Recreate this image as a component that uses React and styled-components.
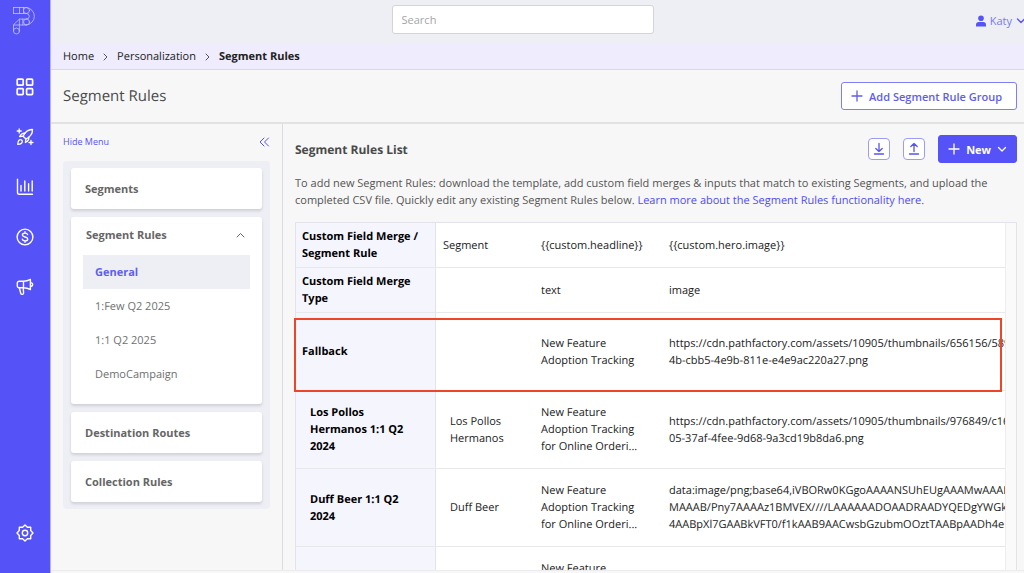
import React, { useState } from 'react';
import styled, { createGlobalStyle } from 'styled-components';

const GlobalStyle = createGlobalStyle`
    * {
        box-sizing: border-box;
    }

    body {
        margin: 0;
        background: #f7f7f7;
        color: #222;
        font-family: "Open Sans", "Noto Sans", sans-serif;
        font-size: 11px;
        line-height: 17px;
        text-rendering: geometricPrecision;
    }

    button, input {
        font: inherit;
    }

    a {
        color: inherit;
        text-decoration: none;
    }

    svg {
        display: block;
        flex-shrink: 0;
        fill: none;
        stroke: currentColor;
        stroke-linecap: round;
        stroke-linejoin: round;
    }
`;

const Shell = styled.div`
    display: flex;
    height: 100vh;
    overflow: hidden;
`;

const Sidebar = styled.nav`
    display: flex;
    flex-direction: column;
    align-items: center;
    gap: 32px;
    width: 51px;
    flex-shrink: 0;
    padding: 6px 0 31px;
    background: #5553f7;
    border-right: 1px solid #b5b4f8;
    color: #fff;
`;

const NavLink = styled.a`
    display: block;

    &:last-child {
        margin-top: auto;
    }
`;

const LogoLink = styled.a`
    margin-bottom: 11px;
    color: #c3c2fc;
`;

const Page = styled.div`
    display: flex;
    flex-direction: column;
    flex: 1;
    min-width: 0;
`;

const TopBar = styled.header`
    display: grid;
    grid-template-columns: 35% 27% 1fr;
    padding: 5px 0 10px;
    background: #eeeff5;
`;

const SearchInput = styled.input`
    grid-column: 2;
    width: 100%;
    height: 29px;
    padding: 0 9px;
    border: 1px solid #d3d3d8;
    border-radius: 3px;
    background: #fff;
    outline: none;

    &::placeholder {
        color: #a5a5a8;
    }
`;

const UserButton = styled.button`
    display: flex;
    align-items: center;
    gap: 4px;
    justify-self: end;
    padding: 2px 0 0;
    border: none;
    background: none;
    color: #5553f7;
    cursor: pointer;

    span {
        color: #7a79ee;
    }
`;

const Breadcrumb = styled.nav`
    display: flex;
    align-items: center;
    gap: 9px;
    height: 26px;
    padding: 0 12px;
    border-bottom: 1px solid #d9d9de;
    background: #eeecfd;

    [aria-current] {
        font-weight: 700;
    }

    svg {
        color: #555;
    }
`;

const TitleBar = styled.div`
    display: flex;
    align-items: center;
    justify-content: space-between;
    padding: 12px 7px 12px 12px;
    border-bottom: 2px solid #e2e2e3;
`;

const PageTitle = styled.h1`
    margin: 0;
    font-size: 15px;
    font-weight: 400;
    line-height: 24px;
    color: #4a4a4a;
`;

const Button = styled.button`
    display: flex;
    align-items: center;
    gap: 6px;
    height: 28px;
    padding: ${(props) => (props.$primary ? '0 9px' : '0 14px 0 9px')};
    border: 1px solid ${(props) => (props.$primary ? '#5553f7' : '#7f7ef5')};
    border-radius: 3px;
    background: ${(props) => (props.$primary ? '#5553f7' : '#fff')};
    color: ${(props) => (props.$primary ? '#fff' : '#5f5ee9')};
    font-weight: ${(props) => (props.$primary ? 700 : 600)};
    cursor: pointer;
`;

const Content = styled.div`
    display: flex;
    flex: 1;
    min-height: 0;
    margin-bottom: 2px;
    border-bottom: 1px solid #ececee;
`;

const Aside = styled.aside`
    width: 232px;
    flex-shrink: 0;
    padding: 9px 12px;
    border-right: 1px solid #dcdcde;
`;

const HideMenu = styled.button`
    display: flex;
    align-items: center;
    justify-content: space-between;
    width: 100%;
    margin-bottom: 11px;
    padding: 0;
    border: none;
    background: none;
    color: #5553f7;
    font-size: 9px;
    line-height: 17px;
    cursor: pointer;
`;

const Menu = styled.div`
    display: flex;
    flex-direction: column;
    gap: 8px;
    padding: 7px 8px;
    border-radius: 4px;
    background: #eeeff5;
`;

const MenuCard = styled.div`
    border-radius: 3px;
    background: #fff;
    box-shadow: 0 2px 3px rgba(60, 60, 80, 0.18);
`;

const MenuHeading = styled.button`
    display: flex;
    align-items: center;
    justify-content: space-between;
    width: 100%;
    height: ${(props) => (props.$open ? '38px' : '41px')};
    padding: ${(props) => (props.$open ? '0 17px 3px 15px' : '0 17px 0 14px')};
    border: none;
    background: none;
    color: #666;
    font-weight: 700;
    cursor: pointer;
`;

const SubMenu = styled.ul`
    margin: 0;
    padding: 0 12px 13px;
    list-style: none;
`;

const SubLink = styled.a`
    display: block;
    padding: 9px 12px 8px;
    background: ${(props) => (props.$active ? '#eeeff5' : 'none')};
    color: ${(props) => (props.$active ? '#5f5ef0' : '#707070')};
    font-weight: ${(props) => (props.$active ? 700 : 400)};
`;

const Main = styled.main`
    display: flex;
    flex-direction: column;
    flex: 1;
    min-width: 0;
    padding: 11px 7px 0 12px;
`;

const ListHeader = styled.div`
    display: flex;
    align-items: center;
    justify-content: space-between;
`;

const ListTitle = styled.h2`
    margin: 0;
    font-size: 12px;
    font-weight: 700;
    color: #4a4a4a;
`;

const Actions = styled.div`
    display: flex;
    align-items: center;
    gap: 13px;
`;

const IconButton = styled.button`
    display: flex;
    align-items: center;
    justify-content: center;
    width: 22px;
    height: 22px;
    padding: 0;
    border: 1px solid #9c9bf5;
    border-radius: 4px;
    background: #fff;
    color: #5553f7;
    cursor: pointer;
`;

const Description = styled.p`
    margin: 12px 0 13px;
    color: #555;

    a {
        color: #4f4df5;
    }
`;

const TableArea = styled.div`
    position: relative;
    flex: 1;
    min-height: 0;
`;

const TableFrame = styled.div`
    height: 100%;
    padding-right: 10px;
    overflow: hidden;
    border: 1px solid #e3e4ea;
    border-bottom: none;
    background: #fafafa;
`;

const TableScroll = styled.div`
    height: 100%;
    overflow: hidden;
    border-right: 1px solid #ededf0;
    background: #fff;
`;

const Table = styled.table`
    width: 100%;
    table-layout: fixed;
    border-collapse: separate;
    border-spacing: 0;
    color: #222;
`;

const Row = styled.tr`
    height: ${(props) => (props.$tall ? '78px' : '45px')};
`;

const HeadCell = styled.th`
    padding: ${(props) => (props.$indent ? '0 24px 0 14px' : '0 6px')};
    border-right: 1px solid #e3e4ea;
    border-bottom: 1px solid #e8e8ec;
    background: #f5f5fe;
    color: #000;
    font-weight: 700;
    text-align: left;
`;

const Cell = styled.td`
    padding: ${(props) => (props.$indent ? '0 8px 0 14px' : '0 7px')};
    border-bottom: 1px solid #e8e8ec;
    white-space: pre-line;
`;

const UrlCell = styled(Cell)`
    overflow: hidden;
    padding-right: 0;
    white-space: pre;
`;

const Highlight = styled.div`
    position: absolute;
    top: 96px;
    right: 15px;
    left: -1px;
    height: 74px;
    border: 2px solid #ee4529;
    pointer-events: none;
`;

const Logo = () => (
    <svg width="26" height="29" viewBox="0 0 26 29" strokeWidth="0.8">
        <path d="M1.5 1.5h13M1.5 7.5h13M1.5 1.5v6M7.5 1.5v6M11.500 1.500v6M14.5 1.5a8.8 8.8 0 0 1 0 17.5" />
        <circle cx="14.5" cy="4.5" r="3" />
        <path d="M14.5 7.5a2.8 2.8 0 0 1 0 5.6M14.5 13.1H7.4L1.5 18.8V25M7.4 13.1v5.8M1.5 19h13M7.4 18.9V25M10.8 13.1v5.8" />
        <circle cx="14.5" cy="16" r="3" />
        <circle cx="4.5" cy="25" r="3" />
    </svg>
);

const GridIcon = () => (
    <svg width="18" height="18" viewBox="0 0 18 18" strokeWidth="1.7">
        <rect x="1.2" y="1.2" width="6" height="6" rx="0.8" />
        <rect x="10.6" y="1.2" width="6" height="6" rx="0.8" />
        <rect x="1.2" y="10.6" width="6" height="6" rx="0.8" />
        <rect x="10.6" y="10.6" width="6" height="6" rx="0.8" />
    </svg>
);

const RocketIcon = () => (
    <svg width="18" height="18" viewBox="0 0 18 18" strokeWidth="1.3">
        <path d="M16.500 1.500c-4-.2-7.200 2.200-9.400 6.700l2.800 2.800c4.400-2.200 6.800-5.400 6.600-9.500z" />
        <path d="M9 5.200C6.500 5 4.800 6.200 3.600 8.600l3.500-.4M12.800 9.200c.2 2.400-1 4.200-3.400 5.300l.5-3.500" />
        <path d="M1.800 16.400c.2-3.200 1.200-4.700 2.700-4.700a1.700 1.700 0 0 1 1.800 1.800c0 1.600-1.400 2.600-4.500 2.900z" />
        <path d="M3.200 1v4M1.200 3h4M15 12.500v4M13 14.500h4" />
    </svg>
);

const ChartIcon = () => (
    <svg width="18" height="18" viewBox="0 0 18 18" strokeWidth="1.4">
        <path d="M1.500 1.200v13.300a1.800 1.800 0 0 0 1.800 1.800h13.200M5 7.500v5.500M8.800 3v10M12.600 5.800V13M16.200 3v10" />
    </svg>
);

const DollarIcon = () => (
    <svg width="18" height="18" viewBox="0 0 18 18" strokeWidth="1.4">
        <circle cx="9" cy="9" r="7.9" />
        <path d="M11.600 6.600c-.3-1-1.300-1.500-2.600-1.500-1.600 0-2.600.7-2.600 1.900 0 2.700 5.300 1.300 5.300 4 0 1.200-1.100 1.900-2.700 1.900-1.400 0-2.500-.6-2.700-1.700M9 3.700v1.400M9 12.900v1.400" />
    </svg>
);

const MegaphoneIcon = () => (
    <svg width="18" height="18" viewBox="0 0 18 18" strokeWidth="1.4">
        <path d="M7.500 3.200H3.200A1.900 1.900 0 0 0 1.300 5.100v2.800a1.900 1.900 0 0 0 1.900 1.900h4.300c2.700 0 4.800.6 6.900 1.800V1.400C12.300 2.600 10.200 3.200 7.500 3.200zM7.500 3.200v6.600M14.400 4.600c3 .1 3 3.800 0 3.900" />
        <path d="M3.300 9.800l1.500 5.700c.4 1.400 3 1 2.800-.6L7.200 9.800" />
    </svg>
);

const GearIcon = () => (
    <svg width="18" height="18" viewBox="0 0 18 18" strokeWidth="1.4">
        <path d="M9 1l2.400 2.300h3.300v3.300L17 9l-2.300 2.400v3.300h-3.300L9 17l-2.400-2.300H3.300v-3.300L1 9l2.300-2.400V3.300h3.300z" />
        <circle cx="9" cy="9" r="2.7" />
    </svg>
);

const PersonIcon = () => (
    <svg width="10" height="12" viewBox="0 0 10 12">
        <circle cx="5" cy="3.2" r="2.8" fill="currentColor" stroke="none" />
        <path d="M0 11.500V9.600C0 8 1.200 7 2.700 7h4.600C8.800 7 10 8 10 9.600v1.900z" fill="currentColor" stroke="none" />
    </svg>
);

const PlusIcon = () => (
    <svg width="12" height="12" viewBox="0 0 12 12" strokeWidth="1.3">
        <path d="M6 1v10M1 6h10" />
    </svg>
);

const ArrowIcon = ({ up }) => (
    <svg width="12" height="14" viewBox="0 0 12 14" strokeWidth="1.3">
        <path d={up ? 'M6 9.500V1.500M2.800 4.500L6 1.500l3.200 3M1.500 12h9' : 'M6 1.500v8M2.800 6.500l3.200 3 3.200-3M1.500 12h9'} />
    </svg>
);

const ChevronRight = () => (
    <svg width="5" height="8" viewBox="0 0 5 8">
        <path d="M1 1l3 3-3 3" />
    </svg>
);

const navItems = [
    { label: 'Dashboard', Icon: GridIcon },
    { label: 'Campaigns', Icon: RocketIcon },
    { label: 'Analytics', Icon: ChartIcon },
    { label: 'Revenue', Icon: DollarIcon },
    { label: 'Promotion', Icon: MegaphoneIcon },
    { label: 'Settings', Icon: GearIcon },
];

const groups = ['General', '1:Few Q2 2025', '1:1 Q2 2025', 'DemoCampaign'];

const rows = [
    { name: 'Custom Field Merge / Segment Rule', segment: 'Segment', headline: '{{custom.headline}}', image: '{{custom.hero.image}}' },
    { name: 'Custom Field Merge Type', segment: '', headline: 'text', image: 'image' },
    {
        name: 'Fallback',
        segment: '',
        headline: 'New Feature\nAdoption Tracking',
        image: 'https://cdn.pathfactory.com/assets/10905/thumbnails/656156/589\n4b-cbb5-4e9b-811e-e4e9ac220a27.png',
        tall: true,
    },
    {
        name: 'Los Pollos Hermanos 1:1 Q2 2024',
        segment: 'Los Pollos Hermanos',
        headline: 'New Feature\nAdoption Tracking\nfor Online Orderi...',
        image: 'https://cdn.pathfactory.com/assets/10905/thumbnails/976849/c16\n05-37af-4fee-9d68-9a3cd19b8da6.png',
        tall: true,
        indent: true,
    },
    {
        name: 'Duff Beer 1:1 Q2 2024',
        segment: 'Duff Beer',
        headline: 'New Feature\nAdoption Tracking\nfor Online Orderi...',
        image: 'data:image/png;base64,iVBORw0KGgoAAAANSUhEUgAAAMwAAAD\nMAAAB/Pny7AAAAz1BMVEX////LAAAAAADOAADRAADYQEDgYWGkA\n4AABpXl7GAABkVFT0/f1kAAB9AACwsbGzubmOOztTAABpAADh4eF',
        tall: true,
        indent: true,
    },
    {
        name: '',
        segment: '',
        headline: 'New Feature\nAdoption Tracking\nfor Online Orderi...',
        image: '',
        tall: true,
        indent: true,
    },
];

const App = () => {
    const [group, setGroup] = useState('General');
    const [open, setOpen] = useState(true);

    return (
        <>
            <GlobalStyle />
            <Shell>
                <Sidebar>
                    <LogoLink href="#home" aria-label="Home">
                        <Logo />
                    </LogoLink>
                    {navItems.map(({ label, Icon }) => (
                        <NavLink key={label} href="#nav" aria-label={label}>
                            <Icon />
                        </NavLink>
                    ))}
                </Sidebar>
                <Page>
                    <TopBar>
                        <SearchInput type="search" placeholder="Search" aria-label="Search" />
                        <UserButton>
                            <PersonIcon />
                            <span>Katy</span>
                            <svg width="8" height="8" viewBox="0 0 8 8" strokeWidth="1.3">
                                <path d="M1.500 2l3.500 3.500L8.500 2" />
                            </svg>
                        </UserButton>
                    </TopBar>
                    <Breadcrumb aria-label="Breadcrumb">
                        <a href="#home">Home</a>
                        <ChevronRight />
                        <a href="#personalization">Personalization</a>
                        <ChevronRight />
                        <a href="#rules" aria-current="page">Segment Rules</a>
                    </Breadcrumb>
                    <TitleBar>
                        <PageTitle>Segment Rules</PageTitle>
                        <Button>
                            <PlusIcon />
                            Add Segment Rule Group
                        </Button>
                    </TitleBar>
                    <Content>
                        <Aside>
                            <HideMenu>
                                Hide Menu
                                <svg width="12" height="12" viewBox="0 0 12 12">
                                    <path d="M6 2L2 6l4 4M10.500 2l-4 4 4 4" />
                                </svg>
                            </HideMenu>
                            <Menu>
                                <MenuCard>
                                    <MenuHeading>Segments</MenuHeading>
                                </MenuCard>
                                <MenuCard>
                                    <MenuHeading $open aria-expanded={open} onClick={() => setOpen(!open)}>
                                        Segment Rules
                                        <svg width="9" height="6" viewBox="0 0 9 6">
                                            <path d="M1 5l3.500-3.500L8 5" />
                                        </svg>
                                    </MenuHeading>
                                    {open && (
                                        <SubMenu>
                                            {groups.map((name) => (
                                                <li key={name}>
                                                    <SubLink href="#group" $active={group === name} onClick={() => setGroup(name)}>
                                                        {name}
                                                    </SubLink>
                                                </li>
                                            ))}
                                        </SubMenu>
                                    )}
                                </MenuCard>
                                <MenuCard>
                                    <MenuHeading>Destination Routes</MenuHeading>
                                </MenuCard>
                                <MenuCard>
                                    <MenuHeading>Collection Rules</MenuHeading>
                                </MenuCard>
                            </Menu>
                        </Aside>
                        <Main>
                            <ListHeader>
                                <ListTitle>Segment Rules List</ListTitle>
                                <Actions>
                                    <IconButton aria-label="Download">
                                        <ArrowIcon />
                                    </IconButton>
                                    <IconButton aria-label="Upload">
                                        <ArrowIcon up />
                                    </IconButton>
                                    <Button $primary>
                                        <PlusIcon />
                                        New
                                        <svg width="10" height="8" viewBox="0 0 10 8" strokeWidth="1.3">
                                            <path d="M1.500 2.500L5 6l3.500-3.500" />
                                        </svg>
                                    </Button>
                                </Actions>
                            </ListHeader>
                            <Description>
                                To add new Segment Rules: download the template, add custom field merges &amp; inputs that match to
                                existing Segments, and upload the completed CSV file. Quickly edit any existing Segment Rules
                                below. <a href="#learn">Learn more about the Segment Rules functionality here.</a>
                            </Description>
                            <TableArea>
                                <TableFrame>
                                    <TableScroll>
                                        <Table>
                                            <colgroup>
                                                <col style={{ width: 140 }} />
                                                <col style={{ width: 98 }} />
                                                <col style={{ width: 128 }} />
                                                <col />
                                            </colgroup>
                                            <tbody>
                                                {rows.map((row, index) => (
                                                    <Row key={index} $tall={row.tall}>
                                                        <HeadCell scope="row" $indent={row.indent}>{row.name}</HeadCell>
                                                        <Cell $indent={row.indent}>{row.segment}</Cell>
                                                        <Cell>{row.headline}</Cell>
                                                        <UrlCell>{row.image}</UrlCell>
                                                    </Row>
                                                ))}
                                            </tbody>
                                        </Table>
                                    </TableScroll>
                                </TableFrame>
                                <Highlight />
                            </TableArea>
                        </Main>
                    </Content>
                </Page>
            </Shell>
        </>
    );
};

export default App;
